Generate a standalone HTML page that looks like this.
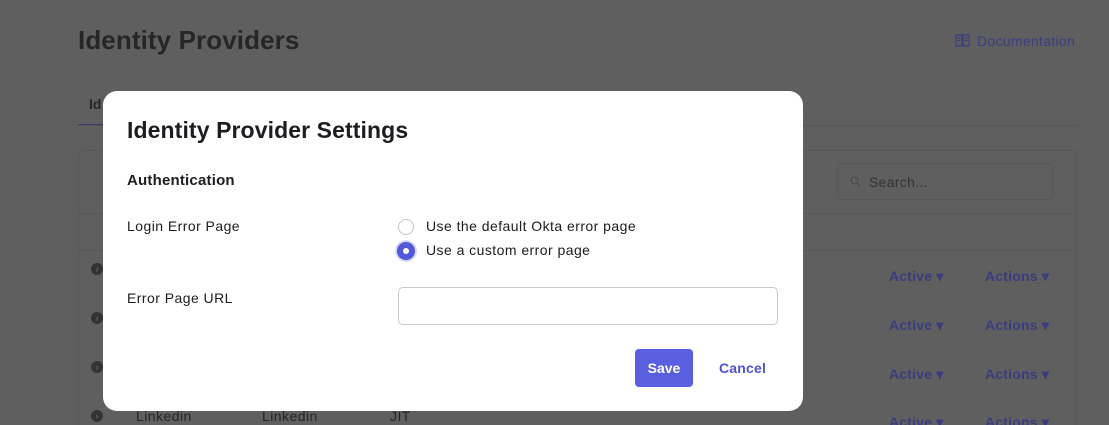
<!DOCTYPE html>
<html><head><meta charset="utf-8"><style>
*{box-sizing:border-box;margin:0;padding:0}
html,body{width:1109px;height:425px;overflow:hidden}
body{background:#5f5f5f;font-family:"Liberation Sans",sans-serif;position:relative}
.a{position:absolute;white-space:nowrap}
.bg{color:#262626}
.blue{color:#393d7f;font-weight:bold;font-size:14px;letter-spacing:0.2px}
.modal{position:absolute;left:103px;top:91px;width:700px;height:320px;background:#fff;border-radius:14px}
.modal .a{color:#1d1d21}
.t{font-size:14px;letter-spacing:0.45px}
.dot{position:absolute;left:91px;width:12px;height:12px;border-radius:50%;background:#333;color:#5f5f5f;font-size:9px;line-height:12px;text-align:center;font-weight:bold}
</style></head><body>
<div class="a bg" style="left:78px;top:25px;font-size:26px;font-weight:bold;letter-spacing:0.1px">Identity Providers</div>
<svg class="a" style="left:955px;top:34px" width="15" height="13" viewBox="0 0 15 13"><path d="M1 1h6v11H1zM8 1h6v11H8zM2.5 4h3M2.5 6.5h3M9.5 4h3M9.5 6.5h3" stroke="#3b3f80" fill="none" stroke-width="1.2"/></svg>
<div class="a" style="left:977px;top:33px;font-size:14px;color:#3b3f80;letter-spacing:0.3px">Documentation</div>
<div class="a bg" style="left:89px;top:96px;font-size:14px;font-weight:bold">Id</div>
<div class="a" style="left:78px;top:124px;width:30px;height:2px;background:#393d6e"></div>
<div class="a" style="left:78px;top:125px;width:999px;height:1px;background:#555"></div>
<div class="a" style="left:78px;top:150px;width:999px;height:280px;border:1px solid #585858;border-radius:4px"></div>
<div class="a" style="left:78px;top:213px;width:999px;height:1px;background:#585858"></div>
<div class="a" style="left:78px;top:250px;width:999px;height:1px;background:#585858"></div>
<div class="a" style="left:837px;top:163px;width:216px;height:37px;border:1px solid #575757;border-radius:5px"></div>
<svg class="a" style="left:850px;top:176px" width="11" height="11" viewBox="0 0 11 11"><circle cx="4.5" cy="4.5" r="3.5" stroke="#4a4a4a" fill="none"/><path d="M7 7l3 3" stroke="#4a4a4a"/></svg>
<div class="a" style="left:869px;top:174px;font-size:14px;color:#333;letter-spacing:0.3px">Search...</div>
<div class="a blue" style="left:889px;top:268px">Active ▾</div><div class="a blue" style="left:985px;top:268px">Actions ▾</div>
<div class="a blue" style="left:889px;top:317px">Active ▾</div><div class="a blue" style="left:985px;top:317px">Actions ▾</div>
<div class="a blue" style="left:889px;top:366px">Active ▾</div><div class="a blue" style="left:985px;top:366px">Actions ▾</div>
<div class="a blue" style="left:889px;top:414px">Active ▾</div><div class="a blue" style="left:985px;top:414px">Actions ▾</div>
<div class="dot" style="top:263px">›</div>
<div class="dot" style="top:312px">›</div>
<div class="dot" style="top:361px">›</div>
<div class="dot" style="top:410px">›</div>
<div class="a bg t" style="left:136px;top:408px">Linkedin</div>
<div class="a bg t" style="left:262px;top:408px">Linkedin</div>
<div class="a bg t" style="left:390px;top:408px">JIT</div>
<div class="modal">
<div class="a" style="left:24px;top:26px;font-size:23px;font-weight:bold;letter-spacing:0.1px;color:#1d1d21">Identity Provider Settings</div>
<div class="a" style="left:24px;top:81px;font-size:15px;font-weight:bold;letter-spacing:0.2px">Authentication</div>
<div class="a t" style="left:24px;top:127px">Login Error Page</div>
<div class="a t" style="left:24px;top:199px">Error Page URL</div>
<div class="a" style="left:295px;top:128px;width:16px;height:16px;border-radius:50%;border:1.5px solid #c4c4c8"></div>
<div class="a" style="left:294px;top:151px;width:18px;height:18px;border-radius:50%;background:#5257dc;box-shadow:0 0 0 2px #d7d8f6"><div style="position:absolute;left:6px;top:6px;width:6px;height:6px;border-radius:50%;background:#fff"></div></div>
<div class="a t" style="left:323px;top:127px">Use the default Okta error page</div>
<div class="a t" style="left:323px;top:151px">Use a custom error page</div>
<div class="a" style="left:295px;top:196px;width:380px;height:38px;border:1px solid #c9c9cc;border-radius:5px"></div>
<div class="a" style="left:532px;top:258px;width:58px;height:38px;border-radius:4px;background:#5a5fdf;color:#fff;font-size:14px;font-weight:bold;text-align:center;line-height:38px">Save</div>
<div class="a" style="left:616px;top:269px;font-size:14px;font-weight:bold;color:#4d52d8;letter-spacing:0.2px">Cancel</div>
</div>
</body></html>
